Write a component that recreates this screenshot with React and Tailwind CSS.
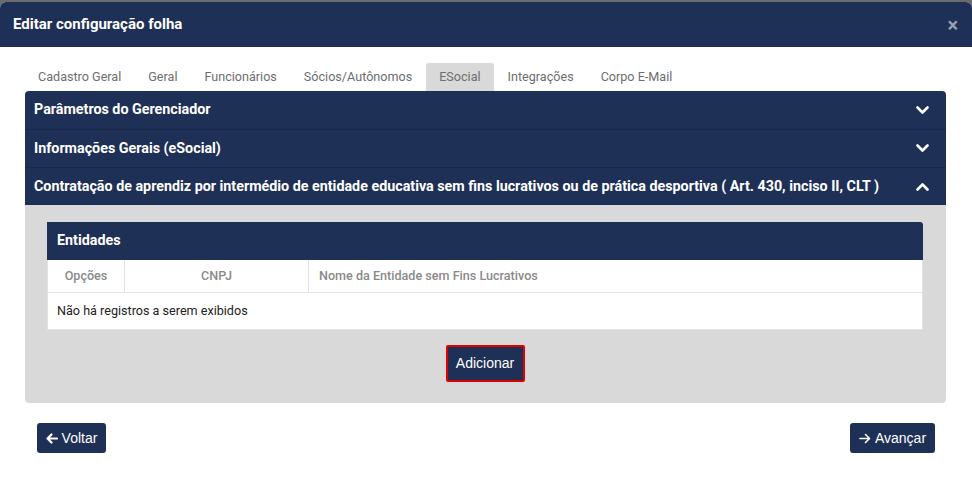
import React from "react";

const NAVY = "bg-[#1f3056]";

function Chevron({ up }) {
  return (
    <svg width="13" height="9" viewBox="0 0 13 9" className="shrink-0">
      <path
        d={up ? "M1.5 7.5 L6.5 2.5 L11.5 7.5" : "M1.5 1.5 L6.5 6.5 L11.5 1.5"}
        stroke="white"
        strokeWidth="2.6"
        fill="none"
        strokeLinecap="round"
        strokeLinejoin="round"
      />
    </svg>
  );
}

function Arrow({ left }) {
  return (
    <svg width="12" height="11" viewBox="0 0 12 11" className="shrink-0">
      {left ? (
        <path d="M11 5.5 H2 M5.5 1.5 L1.5 5.5 L5.5 9.5" stroke="white" strokeWidth="2.2" fill="none" strokeLinecap="round" strokeLinejoin="round" />
      ) : (
        <path d="M1 5.5 H10 M6.5 1.5 L10.5 5.5 L6.5 9.5" stroke="white" strokeWidth="1.6" fill="none" strokeLinecap="round" strokeLinejoin="round" />
      )}
    </svg>
  );
}

export default function App() {
  const tabs = ["Cadastro Geral", "Geral", "Funcionários", "Sócios/Autônomos", "ESocial", "Integrações", "Corpo E-Mail"];
  return (
    <div className="w-[972px] h-[484px] bg-[#6b6b6b] overflow-hidden" style={{ fontFamily: "Roboto, 'Liberation Sans', sans-serif" }}>
      <div className="mt-[2px] h-[482px] bg-white rounded-t-[6px] flex flex-col">
        {/* Header */}
        <div className={`${NAVY} h-[45px] rounded-t-[6px] flex items-center justify-between pl-[13px] pr-[14px]`}>
          <span className="text-white font-bold text-[15px]">Editar configuração folha</span>
          <span className="text-[#9aa1b3] font-bold text-[20px] leading-none">×</span>
        </div>

        {/* Body */}
        <div className="px-[25px] pt-[16px] flex flex-col">
          <div className="flex h-[28px] items-end">
            {tabs.map((t) => (
              <div
                key={t}
                className={`h-[28px] pl-[13px] pr-[13px] mr-[1px] flex items-center text-[12.6px] text-[#6e6e6e] rounded-t-[3px] ${t === "ESocial" ? "bg-[#d9d9d9]" : ""}`}
              >
                {t}
              </div>
            ))}
          </div>

          <div className="w-[921px] rounded-[4px] overflow-hidden">
            {[
              ["Parâmetros do Gerenciador", false],
              ["Informações Gerais (eSocial)", false],
              ["Contratação de aprendiz por intermédio de entidade educativa sem fins lucrativos ou de prática desportiva ( Art. 430, inciso II, CLT )", true],
            ].map(([label, open], i) => (
              <div
                key={i}
                className={`${NAVY} h-[38px] flex items-center justify-between pl-[9px] pr-[17px] ${i > 0 ? "border-t border-[#19284a]" : ""}`}
              >
                <span className="text-white font-bold text-[14.3px]">{label}</span>
                <Chevron up={open} />
              </div>
            ))}

            <div className="bg-[#d9d9d9] pt-[17px] pb-[21px] pl-[22px] pr-[23px] flex flex-col items-center">
              <div className="w-full">
                <div className={`${NAVY} h-[38px] flex items-center px-[10px] rounded-tr-[3px]`}>
                  <span className="text-white font-bold text-[14.3px]">Entidades</span>
                </div>
                <div className="bg-white border-x border-b border-[#e2e2e2]">
                  <div className="flex h-[33px] border-b border-[#e2e2e2] text-[12.6px] text-[#8a8a8a] font-medium">
                    <div className="w-[77px] flex items-center justify-center border-r border-[#e2e2e2]">Opções</div>
                    <div className="w-[184px] flex items-center justify-center border-r border-[#e2e2e2]">CNPJ</div>
                    <div className="flex-1 flex items-center px-[10px]">Nome da Entidade sem Fins Lucrativos</div>
                  </div>
                  <div className="h-[36px] flex items-center px-[9px] text-[12.6px] text-[#222]">Não há registros a serem exibidos</div>
                </div>
              </div>
              <button
                className={`mt-[15px] h-[37px] w-[79px] border-2 border-[#e00000] ${NAVY} text-white text-[14px] rounded-[2px] flex items-center justify-center`}
                style={{ fontFamily: "'Liberation Sans', Arial, sans-serif" }}
              >
                Adicionar
              </button>
            </div>
          </div>

          <div className="flex justify-between mt-[20px] px-[12px]" style={{ fontFamily: "'Liberation Sans', Arial, sans-serif" }}>
            <button className={`${NAVY} h-[30px] w-[69px] rounded-[3px] flex items-center justify-center gap-[4px] text-white text-[14px]`}>
              <Arrow left />
              <span>Voltar</span>
            </button>
            <button className={`${NAVY} h-[30px] w-[85px] rounded-[3px] flex items-center justify-center gap-[4px] text-white text-[14px]`}>
              <Arrow />
              <span>Avançar</span>
            </button>
          </div>
        </div>
      </div>
    </div>
  );
}
